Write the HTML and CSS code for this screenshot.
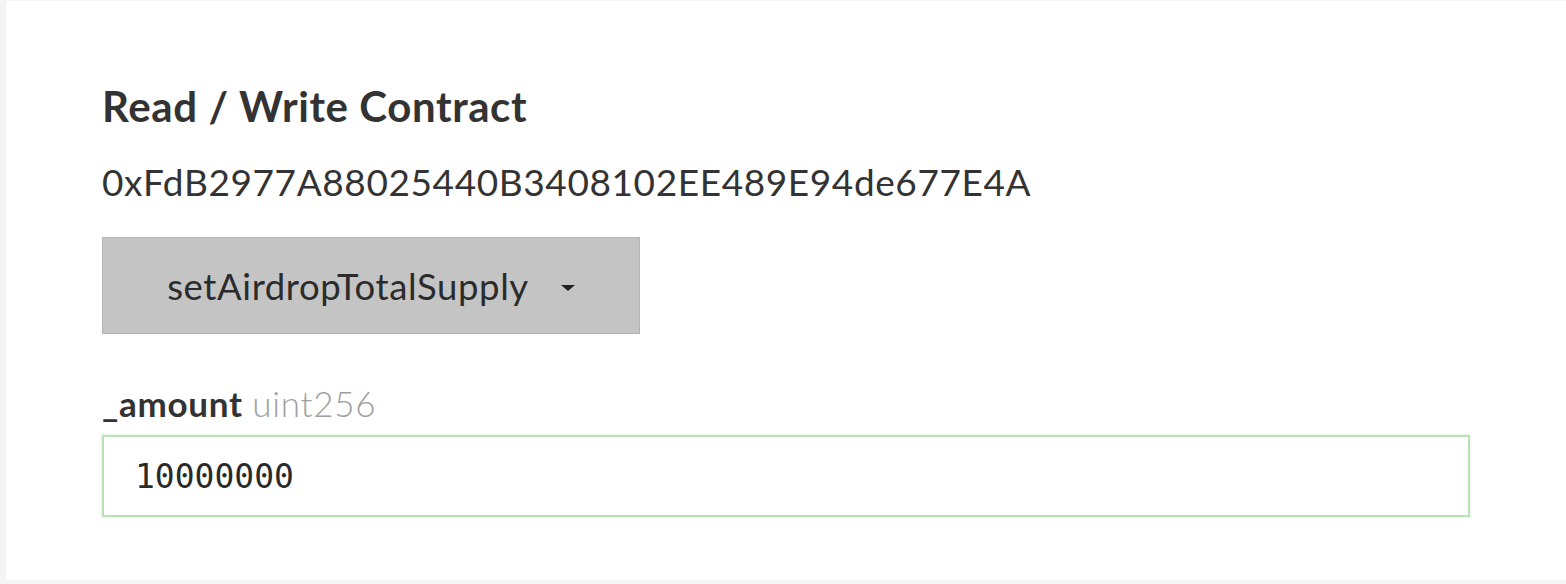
FILE: index.html
```html
<!DOCTYPE html>
<html>
<head>
<meta charset="utf-8">
<link rel="stylesheet" href="styles.css">
</head>
<body>
<main class="card">
  <h1 class="title">Read / Write Contract</h1>
  <div class="address">0xFdB2977A88025440B3408102EE489E94de677E4A</div>
  <button class="fn-select" type="button">
    <span class="fn-name">setAirdropTotalSupply</span>
    <span class="caret"></span>
  </button>
  <label class="param-label" for="amount"><span class="param-name">_amount</span> <span class="param-type">uint256</span></label>
  <div class="input-box" id="amount">10000000</div>
</main>
</body>
</html>
```

FILE: styles.css
```css
html, body {
  margin: 0;
  padding: 0;
}
body {
  background: #f4f4f4;
  font-family: Lato, "Noto Sans", sans-serif;
  color: #333333;
  width: 1566px;
  height: 584px;
  overflow: hidden;
}
.card {
  margin: 1px 0 0 6px;
  height: 579px;
  background: #ffffff;
  padding: 83px 0 0 96px;
  box-sizing: border-box;
  display: flex;
  flex-direction: column;
  align-items: flex-start;
}
.title {
  margin: 0;
  font-size: 42px;
  line-height: 44px;
  letter-spacing: 0.6px;
  font-weight: 700;
  color: #333333;
}
.address {
  margin-top: 34px;
  font-size: 37px;
  line-height: 40px;
  letter-spacing: 0.6px;
  color: #333333;
}
.fn-select {
  margin-top: 35px;
  width: 538px;
  height: 97px;
  background: #c4c4c4;
  border: 1px solid #b4b4b4;
  display: flex;
  align-items: center;
  justify-content: center;
  gap: 32px;
  font-family: Lato, "Noto Sans", sans-serif;
  font-size: 36.5px;
  letter-spacing: 0.6px;
  color: #2b2b2b;
  padding: 0;
  box-sizing: border-box;
}
.caret {
  width: 0;
  height: 0;
  border-left: 7px solid transparent;
  border-right: 7px solid transparent;
  border-top: 6px solid #222222;
  margin-top: 4px;
}
.param-label {
  margin-top: 49px;
  font-size: 35px;
  line-height: 40px;
  letter-spacing: 0.7px;
}
.param-name {
  font-weight: 700;
  color: #333333;
}
.param-type {
  font-weight: 300;
  color: #a0a0a0;
}
.input-box {
  margin-top: 12px;
  width: 1368px;
  height: 82px;
  box-sizing: border-box;
  border: 2px solid #b8e2b6;
  box-shadow: 0 0 2px rgba(150, 210, 150, 0.5);
  padding: 0 0 0 31px;
  display: flex;
  align-items: center;
  font-family: "DejaVu Sans Mono", monospace;
  font-size: 33px;
  color: #2a2a2a;
}
```
